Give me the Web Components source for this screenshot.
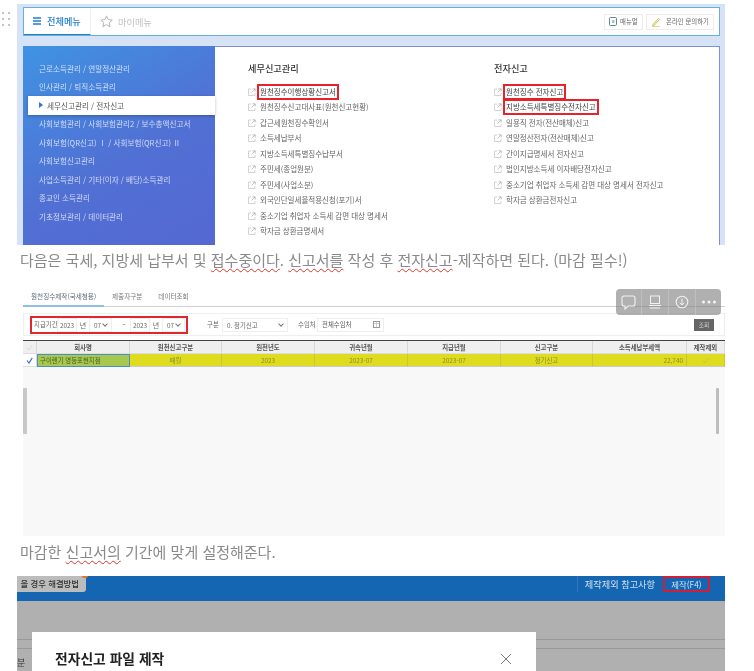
<!DOCTYPE html>
<html lang="ko">
<head>
<meta charset="utf-8">
<title>전자신고</title>
<style>
  html, body { margin: 0; height: 671px; overflow: hidden; background: #fff; }
  body { position: relative; font-family: "Noto Sans CJK KR", "Noto Sans", sans-serif; display: flex; flex-direction: column; padding-top: 4px; box-sizing: border-box; }
</style>
</head>
<body>
<drag-handle></drag-handle>

<tax-menu>
  <side-item>근로소득관리 / 연말정산관리</side-item>
  <side-item>인사관리 / 퇴직소득관리</side-item>
  <side-item active>세무신고관리 / 전자신고</side-item>
  <side-item>사회보험관리 / 사회보험관리2 / 보수총액신고서</side-item>
  <side-item>사회보험(QR신고) Ⅰ / 사회보험(QR신고) Ⅱ</side-item>
  <side-item>사회보험신고관리</side-item>
  <side-item>사업소득관리 / 기타(이자 / 배당)소득관리</side-item>
  <side-item>종교인 소득관리</side-item>
  <side-item>기초정보관리 / 데이터관리</side-item>

  <menu-col slot="cols" title="세무신고관리">
    <menu-link marked>원천징수이행상황신고서</menu-link>
    <menu-link>원천징수신고대사표(원천신고현황)</menu-link>
    <menu-link>갑근세원천징수확인서</menu-link>
    <menu-link>소득세납부서</menu-link>
    <menu-link>지방소득세특별징수납부서</menu-link>
    <menu-link>주민세(종업원분)</menu-link>
    <menu-link>주민세(사업소분)</menu-link>
    <menu-link>외국인단일세율적용신청(포기)서</menu-link>
    <menu-link>중소기업 취업자 소득세 감면 대상 명세서</menu-link>
    <menu-link>학자금 상환금명세서</menu-link>
  </menu-col>
  <menu-col slot="cols" title="전자신고">
    <menu-link marked>원천징수 전자신고</menu-link>
    <menu-link marked>지방소득세특별징수전자신고</menu-link>
    <menu-link>일용직 전자(전산매체)신고</menu-link>
    <menu-link>연말정산전자(전산매체)신고</menu-link>
    <menu-link>간이지급명세서 전자신고</menu-link>
    <menu-link>법인지방소득세 이자배당전자신고</menu-link>
    <menu-link>중소기업 취업자 소득세 감면 대상 명세서 전자신고</menu-link>
    <menu-link>학자금 상환금전자신고</menu-link>
  </menu-col>
</tax-menu>

<blog-para>다음은 국세, 지방세 납부서 및 <spell-err>접수중이다</spell-err>. <spell-err>신고서를</spell-err> 작성 후 <spell-err>전자신고</spell-err>-제작하면 된다. (마감 필수!)</blog-para>

<filing-screen></filing-screen>

<blog-para style="--top:6px">마감한 <spell-err>신고서의</spell-err> 기간에 맞게 설정해준다.</blog-para>

<dialog-screen></dialog-screen>

<script>
// small helper, every element just sets its shadow html once
class Base extends HTMLElement {
  constructor() {
    super();
    this.attachShadow({ mode: "open" });
  }
  connectedCallback() { this.shadowRoot.innerHTML = this.render(); }
}

class DragHandle extends Base {
  render() {
    return `<style>
      :host{position:absolute;left:2px;top:12px;display:grid;grid-template-columns:2px 2px;column-gap:4px;row-gap:4px}
      i{display:block;width:2px;height:2px;background:#c4c4c4}
    </style>${"<i></i>".repeat(6)}`;
  }
}

class SideItem extends Base {
  render() {
    return `<style>
      :host{display:flex;align-items:center;height:18.5px;padding-left:16px;font-size:7.6px;color:rgba(255,255,255,.72);white-space:nowrap}
      :host([active]){background:#fff;color:#555;margin-left:5px;padding-left:11px;box-shadow:0 1px 3px rgba(0,0,0,.25)}
      b{display:none;width:0;height:0;border-left:4px solid #2f74d0;border-top:3px solid transparent;border-bottom:3px solid transparent;margin-right:4px}
      :host([active]) b{display:block}
    </style><b></b><slot></slot>`;
  }
}

class MenuCol extends Base {
  render() {
    return `<style>
      :host{display:block;width:246px;padding-top:14px;flex:none}
      h3{margin:0 0 9px;height:14px;line-height:14px;font-size:9.2px;font-weight:500;color:#333}
    </style><h3>${this.getAttribute("title")}</h3><slot></slot>`;
  }
}

class MenuLink extends Base {
  render() {
    return `<style>
      :host{display:flex;align-items:center;height:15.5px;font-size:7.5px;color:#666;white-space:nowrap}
      svg{width:8px;height:8px;margin-right:4px;flex:none}
      span{display:block;line-height:10px}
      :host([marked]) span{outline:2px solid #e8222a;outline-offset:1px;color:#444}
    </style>
    <svg viewBox="0 0 8 8" fill="none"><path d="M3 1H.5v6.5H7V5" stroke="#c8c8c8" stroke-width=".8"/><path d="M3.5 4.5 7 1M4.5 .8h2.7v2.7" stroke="#a8a8a8" stroke-width=".7"/></svg>
    <span><slot></slot></span>`;
  }
}

class TaxMenu extends Base {
  render() {
    return `<style>
      :host{display:flex;flex-direction:column;flex:none;margin-left:17px;width:708px;height:241px;box-sizing:border-box;background:#d6e3f6;padding:3px 5px 0 6px;filter:blur(.45px);overflow:hidden}
      .top{flex:none;height:29px;box-sizing:border-box;background:#fff;border:1px solid #68aede;display:flex;align-items:center;margin-bottom:10px}
      .tab{display:flex;align-items:center;height:100%;box-sizing:border-box;width:67px;padding-left:9px;gap:6px;color:#1f7fce;font-size:9.2px;font-weight:500;border-bottom:1px solid #1f7fce;border-right:1px solid #eee;white-space:nowrap}
      .my{display:flex;align-items:center;gap:5px;padding-left:9px;color:#c2c2c2;font-size:9.2px;white-space:nowrap}
      .sp{flex:1}
      .btn{display:flex;align-items:center;gap:3px;height:16px;box-sizing:border-box;border:1px solid #ececec;font-size:6.4px;color:#666;margin-left:3px;white-space:nowrap;flex:none}
      .btn:last-child{margin-right:5px}
      .panel{flex:1;display:flex;background:#fff;border:solid #7f90da;border-width:1px 1px 0 0;min-height:0}
      .side{flex:none;width:192px;margin-top:-1px;padding-top:13px;box-sizing:border-box;background:linear-gradient(150deg,#3f93e2,#5170d4 55%,#5468d2)}
      .cols{flex:1;display:flex;padding-left:33px}
    </style>
    <div class="top">
      <div class="tab">
        <svg width="8" height="8" viewBox="0 0 8 8"><path d="M0 1h8M0 4h8M0 7h8" stroke="#1f7fce" stroke-width="1.4"/></svg>
        전체메뉴
      </div>
      <div class="my">
        <svg width="13" height="13" viewBox="0 0 12 12" fill="none"><path d="M6 .8l1.6 3.5 3.7.4-2.8 2.5.8 3.8L6 8.9 2.700 10.800l.8-3.800L.7 4.700l3.700-.4z" stroke="#b4b4b4" stroke-width=".9"/></svg>
        마이메뉴
      </div>
      <div class="sp"></div>
      <div class="btn" style="width:39px;padding-left:4px">
        <svg width="8" height="9" viewBox="0 0 8 9" fill="none"><rect x=".5" y=".5" width="7" height="8" rx="1" stroke="#5d8a8a"/><rect x="3" y="3" width="2.500" height="3" fill="#a9c4c4"/></svg>
        매뉴얼
      </div>
      <div class="btn" style="width:68px;gap:5px;padding-left:4px">
        <svg width="10" height="10" viewBox="0 0 10 10" fill="none"><path d="M1.500 8 7.500 1.500l1 1L2.500 9z" stroke="#b7b43a" stroke-width=".9"/><path d="M1 9.500h8" stroke="#d9d66a" stroke-width=".8"/></svg>
        온라인 문의하기
      </div>
    </div>
    <div class="panel">
      <div class="side"><slot></slot></div>
      <div class="cols"><slot name="cols"></slot></div>
    </div>`;
  }
}

class SpellErr extends Base {
  render() {
    return `<style>
      :host{display:inline;text-decoration:underline wavy #d8382e 1px;text-underline-offset:2px}
    </style><slot></slot>`;
  }
}

class BlogPara extends Base {
  render() {
    return `<style>
      :host{display:block;flex:none;height:40px;box-sizing:border-box;padding:var(--top,5px) 0 0 20px;font-size:15px;line-height:20px;color:#8a8a8a;white-space:nowrap;filter:blur(.2px)}
    </style><slot></slot>`;
  }
}

class FilingScreen extends Base {
  render() {
    const heads = ["", "회사명", "원천신고구분", "원천년도", "귀속년월", "지급년월", "신고구분", "소득세납부세액", "제작제외"];
    const row = ["", "구이렌기 영등포현지점", "매월", "2023", "2023-07", "2023-07", "정기신고", "22,740", ""];
    const check = (c, w) => `<svg width="7" height="7" viewBox="0 0 7 7" fill="none"><path d="M1 3.500 3 6 6.200 1" stroke="${c}" stroke-width="${w}"/></svg>`;
    const headHtml = heads.map((h, i) => `<div class="c h">${i === 0 ? check("#d4d4d4", .8) : h}</div>`).join("");
    const rowHtml = row.map((r, i) => {
      let cls = "c y";
      if (i === 0) cls = "c chk";
      if (i === 1) cls = "c co";
      if (i === 7) cls = "c y num";
      let inner = r;
      if (i === 0) inner = check("#2f6fd8", 1.2);
      if (i === 8) inner = check("#c4c43c", .8);
      return `<div class="${cls}">${inner}</div>`;
    }).join("");
    return `<style>
      :host{display:flex;flex-direction:column;flex:none;position:relative;margin-left:23px;width:702px;height:251px;background:#fff;font-size:6.4px;color:#666;white-space:nowrap;filter:blur(.45px);overflow:hidden}
      .tabs{flex:none;height:22px;box-sizing:border-box;padding-top:5px;display:flex;align-items:flex-start;border-bottom:1px solid #cfcfcf;font-size:6.6px;color:#777}
      .tab{height:16px;box-sizing:border-box;padding:0 8px;line-height:12px}
      .tab.on{width:81px;border-bottom:2px solid #8fc0e2;color:#5a6a78;margin-bottom:-1px;height:17px}
      .filter{flex:none;height:23px;margin-top:6px;box-sizing:border-box;border:1px solid #efefef;border-right:1px solid #eee;display:flex;align-items:center}
      .mark{height:18px;margin-left:6px;width:158px;box-sizing:border-box;border:2px solid #e0262e;display:flex;align-items:center;padding-left:2px;flex:none}
      .f{flex:none;height:14px;line-height:13px;box-sizing:border-box;border:1px solid #eee;text-align:center}
      .l{flex:none}
      .sel{display:flex;justify-content:space-between;padding:0 4px;text-align:left}
      .sel::after{content:"";width:3px;height:3px;border:solid #777;border-width:0 1px 1px 0;transform:rotate(45deg);margin-top:3px}
      .run{flex:none;width:20px;height:12px;line-height:12px;background:#666;color:#ddd;text-align:center;margin-left:auto;margin-right:10px;font-size:5.6px}
      .grid{flex:none;margin-top:4px;display:grid;grid-template-columns:14px 93px 92px 93px 93px 93px 92px 94px 38px;border-top:1.5px solid #444}
      .c{height:13px;line-height:13px;text-align:center;box-sizing:border-box;border-right:1px solid #d8d8d8;display:flex;align-items:center;justify-content:center;overflow:hidden}
      .h{background:#efefef;font-weight:700;color:#555;border-bottom:1px solid #ddd}
      .y{background:#dfdc1f;color:#8a8a2a;border-right-color:#c9c63a;border-bottom:1px solid #ccc}
      .chk{background:#fff;border-bottom:1px solid #ddd}
      .co{background:#a7c84f;color:#4a5a25;border:1px solid #4a92c6;justify-content:flex-start;padding-left:2px}
      .num{justify-content:flex-end;padding-right:3px}
      .rest{flex:1;background:#f8f8f8;display:flex;justify-content:space-between;padding-top:21px;align-items:flex-start}
      .bar{width:4px;height:46px;border-radius:1px;background:#c8c8c8}
      .bar.r{margin-right:6px;background:#bdbdbd;width:3px}
      .float{position:absolute;left:593px;top:4px;width:105px;height:26px;border-radius:4px;background:rgba(128,128,128,.62);display:grid;grid-template-columns:26px 27px 27px 25px}
      .float div{display:flex;align-items:center;justify-content:center;border-right:1px solid rgba(255,255,255,.2)}
      .float div:last-child{border:0}
    </style>
    <div class="tabs">
      <div class="tab on">원천징수제작(국세청용)</div>
      <div class="tab">제출자구분</div>
      <div class="tab" style="padding:0 0 0 8px">데이터조회</div>
    </div>
    <div class="filter">
      <div class="mark">
        <span class="l" style="width:23px">지급기간</span>
        <span class="f" style="width:20px">2023</span>
        <span class="l" style="width:12px;text-align:center;font-size:7px">년</span>
        <span class="f sel" style="width:23px">07</span>
        <span class="l" style="width:18px;text-align:center;padding-left:6px;box-sizing:border-box">~</span>
        <span class="f" style="width:20px">2023</span>
        <span class="l" style="width:12px;text-align:center;font-size:7px">년</span>
        <span class="f sel" style="width:23px">07</span>
      </div>
      <span class="l" style="margin-left:19px;width:15px">구분</span>
      <span class="f sel" style="width:66px;margin-right:10px">0. 정기신고</span>
      <span class="l" style="width:19px">수임처</span>
      <span class="f" style="width:67px;display:flex;justify-content:space-between;align-items:center;padding:0 3px 0 4px;color:#555">전체수임처
        <svg width="7" height="7" viewBox="0 0 7 7" fill="none"><rect x=".5" y=".5" width="6" height="6" stroke="#999"/><path d="M3.500 1v5M1 2.500h5" stroke="#bbb" stroke-width=".7"/></svg>
      </span>
      <div class="run">조회</div>
    </div>
    <div class="grid">${headHtml}${rowHtml}</div>
    <div class="rest"><div class="bar"></div><div class="bar r"></div></div>
    <div class="float">
      <div><svg width="15" height="15" viewBox="0 0 15 15" fill="none"><path d="M3 1h9a2 2 0 0 1 2 2v6a2 2 0 0 1-2 2H7l-3 3v-3H3a2 2 0 0 1-2-2V3a2 2 0 0 1 2-2z" stroke="#f2f2f2" stroke-width="1.100"/></svg></div>
      <div><svg width="14" height="14" viewBox="0 0 14 14" fill="none"><rect x="2.500" y="1" width="9" height="7.500" stroke="#f2f2f2"/><path d="M1 10.500h12" stroke="#f2f2f2"/><path d="M2 13h10" stroke="#dcdcdc" stroke-width="1.500"/></svg></div>
      <div><svg width="14" height="14" viewBox="0 0 14 14" fill="none"><circle cx="7" cy="7" r="5.800" stroke="#f2f2f2" stroke-width="1.100"/><path d="M7 3.500v6.500M4.800 7.800 7 10l2.200-2.200" stroke="#f2f2f2"/></svg></div>
      <div><svg width="16" height="4" viewBox="0 0 16 4"><circle cx="2.500" cy="2" r="1.500" fill="#f4f4f4"/><circle cx="8" cy="2" r="1.500" fill="#f4f4f4"/><circle cx="13.500" cy="2" r="1.500" fill="#f4f4f4"/></svg></div>
    </div>`;
  }
}

class DialogScreen extends Base {
  render() {
    return `<style>
      :host{display:flex;flex-direction:column;flex:1;margin-left:17px;width:708px;min-height:0;background:#b0b0b0;overflow:hidden;white-space:nowrap;filter:blur(.25px)}
      .blue{flex:none;height:25px;background:#1466b2;display:flex;align-items:flex-start;color:#cfe0f0;font-size:9.2px}
      .tag{position:relative;width:69px;height:16px;line-height:15px;background:#bcbcbc;border-radius:0 0 3px 0;color:#333;font-size:8.4px;font-weight:500;display:flex;justify-content:flex-end;padding-right:7px;box-sizing:border-box}
      .dot{position:absolute;left:65px;top:0;width:6px;height:2px;border-radius:0 0 3px 3px;background:#d8762a}
      .sp{flex:1}
      .ref{height:16px;line-height:16px;border-left:1px solid #2d78bc;padding-left:7px;margin-right:8px}
      .go{width:47px;height:16px;line-height:12px;box-sizing:border-box;border:2px solid #d21f35;text-align:center;margin-right:15px;font-size:8.4px}
      .body{flex:1;display:flex;padding-top:31px;min-height:0;align-items:stretch}
      .strip{flex:none;box-sizing:border-box;padding-top:7px}
      .strip i{display:block;height:1px;background:#9a9a9a;margin-bottom:8px}
      .strip span{display:block;font-size:9px;line-height:11px;color:#333;margin-top:5px}
      .dlg{flex:none;width:504px;background:#fff;display:flex;justify-content:space-between;align-items:flex-start;padding:16px 24px 0 23px;box-sizing:border-box}
      h2{margin:0;font-size:13.8px;line-height:20px;font-weight:700;color:#222}
      svg{margin-top:5px}
    </style>
    <div class="blue">
      <div class="tag">을 경우 해결방법<span class="dot"></span></div>
      <div class="sp"></div>
      <div class="ref">제작제외 참고사항</div>
      <div class="go">제작(F4)</div>
    </div>
    <div class="body">
      <div class="strip" style="width:15px"><i></i><i></i><span>분</span></div>
      <div class="dlg">
        <h2>전자신고 파일 제작</h2>
        <svg width="12" height="12" viewBox="0 0 12 12" fill="none"><path d="M1 1l10 10M11 1 1 11" stroke="#777" stroke-width="1"/></svg>
      </div>
      <div class="strip" style="flex:1"><i></i><i></i></div>
    </div>`;
  }
}

customElements.define("drag-handle", DragHandle);
customElements.define("side-item", SideItem);
customElements.define("menu-col", MenuCol);
customElements.define("menu-link", MenuLink);
customElements.define("tax-menu", TaxMenu);
customElements.define("spell-err", SpellErr);
customElements.define("blog-para", BlogPara);
customElements.define("filing-screen", FilingScreen);
customElements.define("dialog-screen", DialogScreen);
</script>
</body>
</html>
